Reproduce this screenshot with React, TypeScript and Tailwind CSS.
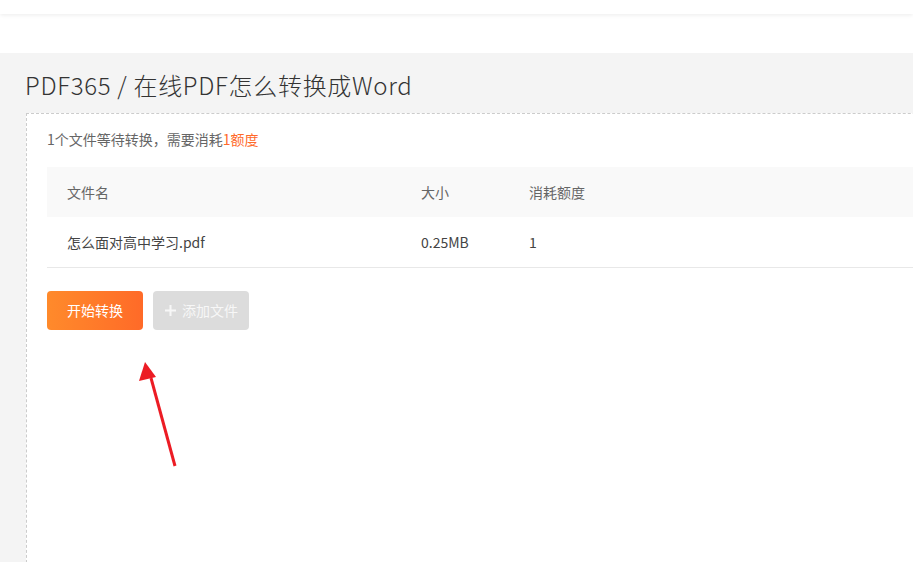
import React from 'react';

const font = { fontFamily: '"Noto Sans CJK SC", "Noto Sans", sans-serif' };

export default function App() {
  return (
    <div className="relative w-[913px] h-[562px] overflow-hidden bg-white text-[#333]" style={font}>
      {/* top bar */}
      <div className="h-[14px] bg-white shadow-[0_1px_4px_rgba(0,0,0,0.08)]" />
      <div className="h-[39px]" />

      <div className="bg-[#f4f4f4] h-[509px] pl-[26px]">
        <h1 className="pt-[16px] pb-[12px] text-[24px] leading-[32px] font-light tracking-[0.7px] text-[#333] -ml-[1px]">
          PDF365 / 在线PDF怎么转换成Word
        </h1>

        <div className="w-[1000px] h-[460px] bg-white border border-dashed border-[#cccccc] pl-[20px] pt-[14px]">
          <p className="text-[14px] leading-[22px] text-[#666]">
            1个文件等待转换，需要消耗<span className="text-[#ff6a2a]">1额度</span>
          </p>

          <div className="mt-[17px] text-[14px]">
            <div className="flex h-[50px] items-center bg-[#f9f9f9] text-[#666]">
              <div className="w-[374px] pl-[20px]">文件名</div>
              <div className="w-[108px]">大小</div>
              <div>消耗额度</div>
            </div>
            <div className="flex h-[51px] items-center border-b border-[#e8e8e8] text-[#444]">
              <div className="w-[374px] pl-[20px]">怎么面对高中学习.pdf</div>
              <div className="w-[108px]">0.25MB</div>
              <div>1</div>
            </div>
          </div>

          <div className="mt-[23px] flex gap-[10px]">
            <button className="w-[96px] h-[39px] rounded-[4px] bg-gradient-to-r from-[#ff8a2b] to-[#ff6a28] text-white text-[14px]">
              开始转换
            </button>
            <button className="w-[96px] h-[39px] rounded-[4px] bg-[#dcdcdc] text-[#f7f7f7] text-[14px] flex items-center justify-center gap-[5px]">
              <svg width="13" height="13" viewBox="0 0 13 13">
                <path d="M6.5 1v11M1 6.5h11" stroke="#f7f7f7" strokeWidth="2" />
              </svg>
              添加文件
            </button>
          </div>
        </div>
      </div>

      {/* red annotation arrow */}
      <svg className="absolute left-0 top-0 pointer-events-none" width="913" height="562">
        <line x1="175" y1="466" x2="151" y2="378" stroke="#ec1c24" strokeWidth="3" />
        <polygon points="145,362 139,381 156,377" fill="#ec1c24" />
      </svg>
    </div>
  );
}
